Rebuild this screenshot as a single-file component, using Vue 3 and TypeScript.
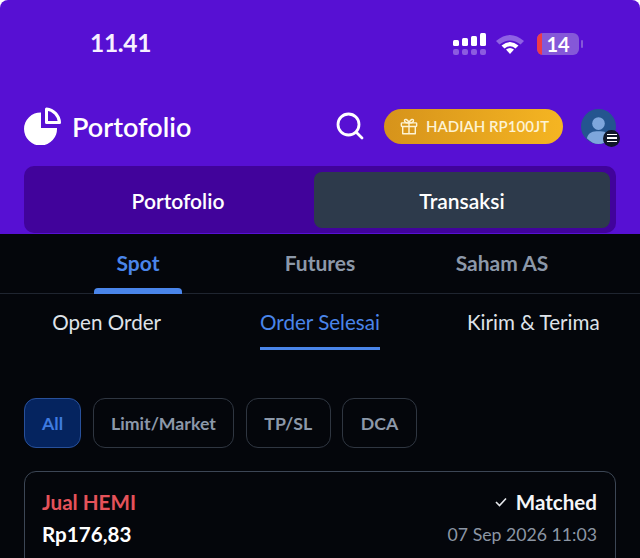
<template>
  <div class="screen">
    <header class="hero">
      <div class="status-bar">
        <span class="clock">11.41</span>
        <div class="status-icons">
          <svg class="signal" width="34" height="24" viewBox="0 0 34 24">
            <rect x="1" y="8" width="6" height="6" rx="1.5" fill="#fff" />
            <rect x="10" y="6" width="6" height="8" rx="1.5" fill="#fff" />
            <rect x="19" y="4" width="6" height="10" rx="1.5" fill="#fff" />
            <rect x="28" y="1" width="6" height="13" rx="1.5" fill="#fff" />
            <rect x="1" y="17" width="6" height="6" rx="2" fill="#8b5be0" />
            <rect x="10" y="17" width="6" height="6" rx="2" fill="#8b5be0" />
            <rect x="19" y="17" width="6" height="6" rx="2" fill="#8b5be0" />
            <rect x="28" y="17" width="6" height="6" rx="2" fill="#8b5be0" />
          </svg>
          <svg class="wifi" width="30" height="22" viewBox="0 0 30 22">
            <path d="M1 8 Q15 -4 29 8 L25.500 11.500 Q15 3.500 4.500 11.500 Z" fill="#8f62e4" />
            <path d="M6.500 12.500 Q15 5.500 23.500 12.500 L20.500 15.500 Q15 11 9.500 15.500 Z" fill="#fff" />
            <path d="M11 16.500 Q15 13.500 19 16.500 L15 21 Z" fill="#fff" />
          </svg>
          <div class="battery">
            <div class="battery-body">
              <span class="battery-level"></span>
              <span class="battery-text">14</span>
            </div>
            <span class="battery-cap"></span>
          </div>
        </div>
      </div>

      <div class="title-row">
        <svg class="pie" width="38" height="38" viewBox="0 0 38 38">
          <path d="M17 5.500 V21 H33 A16.500 16.500 0 1 1 17 5.500 Z" fill="#fff" />
          <path d="M22.500 2 A14.500 14.500 0 0 1 35.500 15.500 H22.500 Z" fill="none" stroke="#fff" stroke-width="3" stroke-linejoin="round" />
        </svg>
        <h1 class="title">Portofolio</h1>
        <svg class="search" width="30" height="30" viewBox="0 0 30 30">
          <circle cx="13.500" cy="13.500" r="10.500" fill="none" stroke="#fff" stroke-width="2.800" />
          <path d="M21.500 21.500 L27 27" stroke="#fff" stroke-width="2.800" stroke-linecap="round" />
        </svg>
        <button type="button" class="promo">
          <svg width="18" height="19" viewBox="0 0 20 20" fill="none" stroke="#fdf3d4" stroke-width="1.600" stroke-linejoin="round">
            <rect x="1.500" y="6" width="17" height="4" rx="0.800" />
            <path d="M3 10 V18 H17 V10 M10 6 V18" />
            <path d="M10 6 C7 6 5 5 5 3.200 C5 1.400 8.500 1.500 10 6 C11.500 1.500 15 1.400 15 3.200 C15 5 13 6 10 6 Z" />
          </svg>
          <span>HADIAH RP100JT</span>
        </button>
        <div class="avatar">
          <svg width="35" height="35" viewBox="0 0 36 36">
            <circle cx="18" cy="18" r="18" fill="#24558f" />
            <circle cx="18" cy="15" r="6.500" fill="#7ea6dc" />
            <path d="M6 30 C8 24 12 23 18 23 C24 23 28 24 30 30 C26 34 22 36 18 36 C14 36 10 34 6 30 Z" fill="#7ea6dc" />
          </svg>
          <span class="avatar-menu">
            <i></i><i></i><i></i>
          </span>
        </div>
      </div>

      <div class="segment">
        <button
          v-for="item in segments"
          :key="item"
          type="button"
          class="segment-item"
          :class="{ active: item === 'Transaksi' }"
        >
          {{ item }}
        </button>
      </div>
    </header>

    <main class="content">
      <nav class="market-tabs">
        <div
          v-for="tab in marketTabs"
          :key="tab"
          class="market-tab"
          :class="{ active: tab === 'Spot' }"
        >
          {{ tab }}
        </div>
      </nav>

      <nav class="order-tabs">
        <div
          v-for="tab in orderTabs"
          :key="tab"
          class="order-tab"
          :class="{ active: tab === 'Order Selesai' }"
        >
          {{ tab }}
        </div>
      </nav>

      <div class="chips">
        <button
          v-for="chip in chips"
          :key="chip"
          type="button"
          class="chip"
          :class="{ active: chip === 'All' }"
        >
          {{ chip }}
        </button>
      </div>

      <section class="order-card">
        <div class="order-row">
          <span class="order-name">Jual HEMI</span>
          <span class="order-status">
            <svg width="12" height="10" viewBox="0 0 12 10" fill="none" stroke="#e6e8ec" stroke-width="1.600">
              <path d="M1 5 L4.500 8.500 L11 1.500" />
            </svg>
            Matched
          </span>
        </div>
        <div class="order-row second">
          <span class="order-price">Rp176,83</span>
          <span class="order-date">07 Sep 2026 11:03</span>
        </div>
      </section>
    </main>
  </div>
</template>

<script setup lang="ts">
const segments: string[] = ['Portofolio', 'Transaksi']
const marketTabs: string[] = ['Spot', 'Futures', 'Saham AS']
const orderTabs: string[] = ['Open Order', 'Order Selesai', 'Kirim & Terima']
const chips: string[] = ['All', 'Limit/Market', 'TP/SL', 'DCA']
</script>

<style>
html,
body {
  margin: 0;
  background: #04060b;
}
</style>

<style scoped>
.screen {
  width: 640px;
  height: 558px;
  overflow: hidden;
  background: #fff;
  font-family: Lato, "Noto Sans", sans-serif;
  color: #fff;
}

.hero {
  height: 234px;
  box-sizing: border-box;
  padding: 0 24px;
  background: #5710d3;
  border-top-left-radius: 8px;
  border-top-right-radius: 8px;
}

.content {
  height: 324px;
  overflow: hidden;
  background: #04060b;
}

.status-bar {
  display: flex;
  align-items: center;
  justify-content: space-between;
  height: 87px;
  padding: 0 33px 0 66px;
}

.clock {
  font-size: 24.5px;
  font-weight: 700;
  line-height: 1;
  letter-spacing: -0.3px;
  color: #f6f0ff;
}

.status-icons {
  display: flex;
  align-items: center;
  gap: 10px;
}

.signal {
  margin-right: -1px;
}

.wifi {
  margin-right: 2px;
}

.battery {
  display: flex;
  align-items: center;
  gap: 2px;
}

.battery-body {
  position: relative;
  width: 42px;
  height: 22px;
  overflow: hidden;
  display: flex;
  align-items: center;
  justify-content: center;
  border-radius: 6px;
  background: #8558d8;
}

.battery-level {
  position: absolute;
  left: 0;
  top: 0;
  bottom: 0;
  width: 5px;
  background: #ee3b48;
}

.battery-text {
  position: relative;
  font-size: 20px;
  font-weight: 700;
  color: #fff;
}

.battery-cap {
  width: 2px;
  height: 8px;
  border-radius: 1px;
  background: #8558d8;
}

.title-row {
  display: flex;
  align-items: center;
  height: 40px;
  margin-top: 19px;
}

.title-row > * {
  flex-shrink: 0;
}

.title {
  width: 120px;
  margin: 0 0 0 10px;
  font-size: 27px;
  font-weight: 600;
  white-space: nowrap;
  color: #fff;
}

.search {
  margin-left: 143px;
}

.promo {
  display: flex;
  align-items: center;
  gap: 8px;
  width: 179px;
  height: 35px;
  margin-left: 19px;
  padding: 0 0 0 16px;
  border: 0;
  border-radius: 18px;
  background: linear-gradient(90deg, #d6931b, #f5b522);
  font-family: inherit;
  font-size: 15px;
  font-weight: 600;
  color: #fdf3d4;
  white-space: nowrap;
}

.avatar {
  position: relative;
  width: 35px;
  height: 35px;
  margin-left: 18px;
}

.avatar svg {
  display: block;
}

.avatar-menu {
  position: absolute;
  right: -4px;
  bottom: -3px;
  display: flex;
  flex-direction: column;
  align-items: center;
  justify-content: center;
  gap: 2px;
  width: 17px;
  height: 17px;
  border-radius: 50%;
  background: #10172a;
}

.avatar-menu i {
  display: block;
  width: 10px;
  height: 1.500px;
  background: #fff;
}

.segment {
  display: grid;
  grid-template-columns: 284px 296px;
  height: 67px;
  box-sizing: border-box;
  margin-top: 20px;
  padding: 6px 6px 5px;
  border-radius: 10px;
  background: #41039b;
}

.segment-item {
  padding: 0 0 0 12px;
  border: 0;
  border-radius: 8px;
  background: transparent;
  font-family: inherit;
  font-size: 21px;
  font-weight: 600;
  color: #fff;
}

.segment-item.active {
  padding: 0;
  background: #2d3a4b;
}

.market-tabs {
  display: grid;
  grid-template-columns: repeat(3, 182px);
  height: 60px;
  box-sizing: border-box;
  padding: 0 0 2px 47px;
  border-bottom: 1px solid #1f2530;
}

.market-tab {
  position: relative;
  display: flex;
  align-items: center;
  justify-content: center;
  font-size: 21px;
  font-weight: 700;
  color: #8c98a9;
}

.market-tab.active {
  color: #4a85ea;
}

.market-tab.active::after {
  content: "";
  position: absolute;
  left: 47px;
  bottom: -3px;
  width: 88px;
  height: 6px;
  border-radius: 4px 4px 0 0;
  background: #4a85ea;
}

.order-tabs {
  display: grid;
  grid-template-columns: repeat(3, 1fr);
  justify-items: center;
  height: 56px;
}

.order-tab {
  display: flex;
  align-items: flex-start;
  height: 37px;
  padding-top: 16px;
  border-bottom: 3px solid transparent;
  font-size: 20.6px;
  color: #dfe3e9;
}

.order-tab.active {
  color: #4a85ea;
  border-bottom-color: #4a85ea;
}

.chips {
  display: flex;
  gap: 11.5px;
  margin: 48px 0 0 24px;
}

.chip {
  height: 50px;
  padding: 0 17.5px;
  border: 1px solid #2f3641;
  border-radius: 12px;
  background: transparent;
  font-family: inherit;
  font-size: 17.7px;
  font-weight: 700;
  color: #8c98a9;
}

.chip.active {
  padding: 0 17px;
  border-color: #28509a;
  background: #05245f;
  color: #3f7be0;
}

.order-card {
  box-sizing: border-box;
  width: 592px;
  height: 120px;
  margin: 23px 0 0 24px;
  padding: 18px 18px 16px 17px;
  border: 1px solid #3c4655;
  border-radius: 12px;
}

.order-row {
  display: flex;
  align-items: center;
  justify-content: space-between;
}

.order-row.second {
  margin-top: 8px;
}

.order-name {
  font-size: 20.6px;
  font-weight: 700;
  color: #e5525a;
}

.order-status {
  display: flex;
  align-items: center;
  gap: 9px;
  font-size: 20.6px;
  font-weight: 700;
  color: #f4f5f7;
}

.order-price {
  font-size: 20.6px;
  font-weight: 700;
  color: #fff;
}

.order-date {
  font-size: 17.7px;
  color: #8c96a4;
}
</style>
